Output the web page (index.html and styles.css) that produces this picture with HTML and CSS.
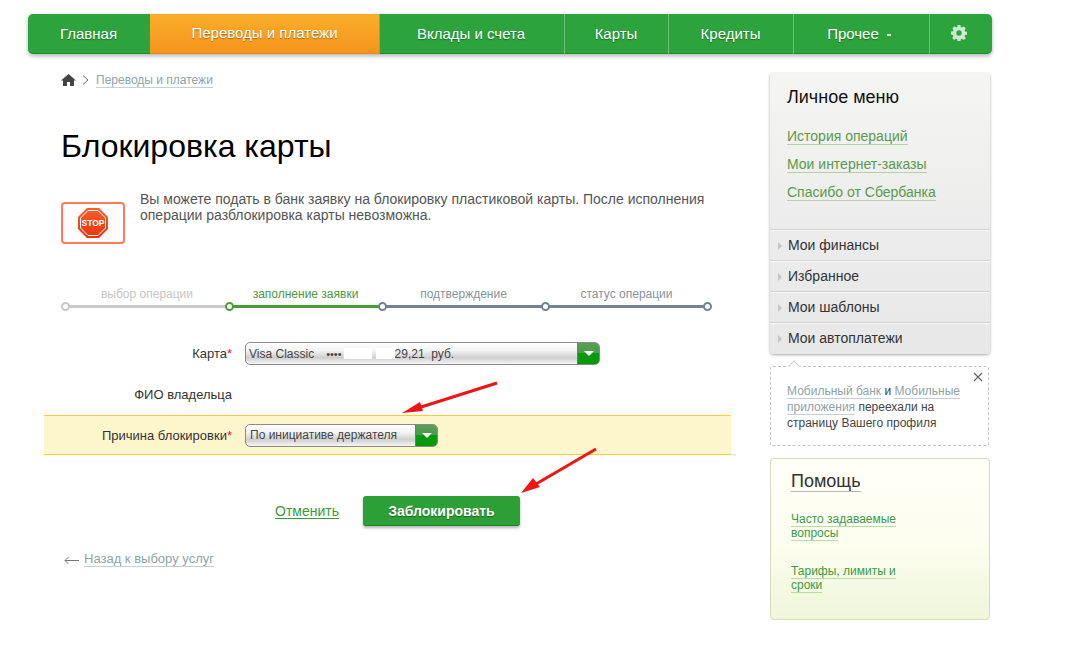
FILE: index.html
```html
<!DOCTYPE html>
<html lang="ru">
<head>
<meta charset="utf-8">
<title>Блокировка карты</title>
<link rel="stylesheet" href="styles.css">
</head>
<body>
<div class="page">
  <nav class="nav">
    <a class="nav-item w1 first">Главная</a>
    <a class="nav-item w2 active">Переводы и платежи</a>
    <a class="nav-item w3">Вклады и счета</a>
    <a class="nav-item w4 sep">Карты</a>
    <a class="nav-item w5 sep">Кредиты</a>
    <a class="nav-item w6 sep">Прочее<span class="caret"></span></a>
    <a class="nav-item w7 sep">
      <svg width="16" height="16" viewBox="0 0 16 16"><path class="gear" fill-rule="evenodd" d="M6.6 0h2.8l.4 2.1 1.2.5 1.8-1.2 2 2-1.2 1.8.5 1.2 2.1.4v2.8l-2.1.4-.5 1.2 1.2 1.8-2 2-1.8-1.2-1.2.5-.4 2.1H6.600l-.4-2.100-1.200-.5-1.800 1.200-2-2 1.200-1.800-.5-1.200L0 9.400V6.600l2.100-.4.5-1.200-1.200-1.800 2-2 1.800 1.200 1.200-.5zM8 5.300a2.700 2.700 0 1 0 0 5.400 2.700 2.700 0 0 0 0-5.400z"/></svg>
    </a>
  </nav>

  <div class="columns">
    <main class="main">
      <div class="crumbs">
        <svg width="15" height="12" viewBox="0 0 15 12"><path class="home" d="M7.500 0 15 6.500h-2V12H9V8H6v4H2V6.500H0z"/></svg>
        <svg class="crumb-sep" width="7" height="10" viewBox="0 0 7 10"><path d="M1 .5 6 5 1 9.500" fill="none" stroke="#666" stroke-width="1"/></svg>
        <a class="link-grey">Переводы и платежи</a>
      </div>
      <h1 class="title">Блокировка карты</h1>
      <div class="intro">
        <div class="stop-box">
          <svg width="30" height="30" viewBox="0 0 30 30">
            <defs><linearGradient id="stopfill" x1="0" y1="0" x2="0" y2="1"><stop offset="0" stop-color="#f9602f"/><stop offset="1" stop-color="#e8330e"/></linearGradient></defs>
            <polygon points="9,0 21,0 30,9 30,21 21,30 9,30 0,21 0,9" fill="url(#stopfill)"/>
            <polygon points="10,2.500 20,2.500 27.500,10 27.500,20 20,27.500 10,27.500 2.500,20 2.500,10" fill="none" stroke="#fff" stroke-width="1"/>
            <text x="15" y="18.200" class="stop-text" text-anchor="middle">STOP</text>
          </svg>
        </div>
        <p class="intro-text">Вы можете подать в банк заявку на блокировку пластиковой карты. После исполнения операции разблокировка карты невозможна.</p>
      </div>

      <div class="steps">
        <div class="step s-grey"><span class="step-label">выбор операции</span></div>
        <div class="step s-green"><span class="step-label">заполнение заявки</span></div>
        <div class="step s-slate"><span class="step-label">подтверждение</span></div>
        <div class="step s-slate last"><span class="step-label">статус операции</span></div>
      </div>

      <div class="form-row row-card">
        <div class="label">Карта<span class="req">*</span></div>
        <div class="select select-card">
          <span class="select-value">Visa Classic<span class="dots">••••</span><span class="mask m1"></span><span class="mask m2"></span>29,21&nbsp; руб.</span>
          <span class="select-btn"><span class="tri"></span></span>
        </div>
      </div>
      <div class="form-row row-name">
        <div class="label">ФИО владельца</div>
      </div>
      <div class="form-row row-reason">
        <div class="label">Причина блокировки<span class="req">*</span></div>
        <div class="select select-reason">
          <span class="select-value">По инициативе держателя</span>
          <span class="select-btn"><span class="tri"></span></span>
        </div>
      </div>

      <div class="actions">
        <a class="cancel">Отменить</a>
        <a class="submit">Заблокировать</a>
      </div>
      <div class="back">
        <svg width="15" height="9" viewBox="0 0 15 9"><path d="M4.500 1 1 4.500 4.500 8M1 4.500h14" fill="none" stroke="#777" stroke-width="1"/></svg>
        <a class="link-grey">Назад к выбору услуг</a>
      </div>
    </main>

    <aside class="side">
      <section class="menu">
        <div class="menu-top">
          <h2 class="menu-title">Личное меню</h2>
          <a class="menu-link"><span>История операций</span></a>
          <a class="menu-link"><span>Мои интернет-заказы</span></a>
          <a class="menu-link"><span>Спасибо от Сбербанка</span></a>
        </div>
        <div class="menu-row">Мои финансы</div>
        <div class="menu-row">Избранное</div>
        <div class="menu-row">Мои шаблоны</div>
        <div class="menu-row">Мои автоплатежи</div>
      </section>
      <section class="notice">
        <span class="notch"></span>
        <svg class="close" width="10" height="10" viewBox="0 0 10 10"><path d="M1 1l8 8M9 1l-8 8" stroke="#666" stroke-width="1.200"/></svg>
        <p class="notice-text"><a class="link-grey">Мобильный банк</a> и <a class="link-grey">Мобильные</a><br><a class="link-grey">приложения</a> переехали на<br>страницу Вашего профиля</p>
      </section>
      <section class="help">
        <h2 class="help-title">Помощь</h2>
        <p class="help-link"><a>Часто задаваемые</a><br><a>вопросы</a></p>
        <p class="help-link"><a>Тарифы, лимиты и</a><br><a>сроки</a></p>
      </section>
    </aside>
  </div>

  <svg class="arrows" width="1072" height="656" viewBox="0 0 1072 656">
    <path d="M497 383 418 408" stroke="#f01414" stroke-width="3" fill="none"/>
    <polygon points="402,413 420,402 423,411" fill="#f01414"/>
    <path d="M596 449 536 484" stroke="#f01414" stroke-width="3" fill="none"/>
    <polygon points="521,493 533,478 540,487" fill="#f01414"/>
  </svg>
</div>
</body>
</html>
```
FILE: styles.css
```css
* { box-sizing: border-box; }
html, body { margin: 0; padding: 0; background: #fff; }
body { font-family: "Liberation Sans", Arial, sans-serif; color: #333; }
.page { position: relative; width: 1072px; height: 656px; overflow: hidden; padding: 14px 0 0 28px; }

.nav { display: flex; width: 964px; height: 40px; border-radius: 5px; background: #2ca33c; box-shadow: 0 2px 4px rgba(0,0,0,.3); border-bottom: 1px solid #23872f; }
.nav-item { display: flex; align-items: center; justify-content: center; color: #fff; font-size: 15px; text-shadow: 0 1px 1px rgba(0,0,0,.35); height: 40px; padding-bottom: 2px; }
.w1 { width: 122px; padding-right: 1px; } .w2 { width: 230px; } .w3 { width: 184px; padding-right: 2px; } .w4 { width: 104px; } .w5 { width: 125px; } .w6 { width: 136px; padding-right: 5px; } .w7 { width: 63px; padding-right: 5px; }
.first { border-radius: 5px 0 0 5px; }
.sep { border-left: 1px solid #6cbf73; }
.w4, .w5 { padding-right: 1px; }
.active { background: linear-gradient(#f9ae2a, #f5951d); border-bottom: 1px solid #e58a17; border-right: 1px solid #d48c25; }
.caret { display: inline-block; width: 4px; height: 2px; margin-left: 8px; background: #cfe9cf; position: relative; top: 2px; }
.gear { fill: #cfe9cf; }

.columns { display: flex; align-items: flex-start; padding-top: 19px; margin-left: 16px; }
.main { width: 687px; flex: none; }
.side { width: 220px; flex: none; margin-left: 39px; }

.crumbs { display: flex; align-items: center; height: 14px; padding-left: 17px; }
.home { fill: #444; }
.crumb-sep { margin-left: 6px; margin-right: 7px; }
.link-grey { color: #8fa3a8; border-bottom: 1px solid #c3d0d3; }
.crumbs .link-grey { font-size: 12px; line-height: 13px; position: relative; top: 1px; }

.title { margin: 39px 0 0 17px; font-weight: 400; font-size: 32px; line-height: 40px; color: #000; }

.intro { display: flex; margin: 24px 0 0 17px; height: 96px; }
.stop-box { width: 64px; height: 42px; margin-top: 12px; border: 2px solid #ff7b5c; border-radius: 4px; display: flex; align-items: center; justify-content: center; background: #fffdfb; }
.stop-box svg { display: block; }
.stop-text { font-family: "Liberation Sans", Arial, sans-serif; font-size: 8.500px; font-weight: 700; fill: #fff; }
.intro-text { margin: 1px 0 0 15px; width: 570px; font-size: 14px; line-height: 16px; color: #555; }

.steps { display: flex; margin-left: 21px; width: 643px; height: 29px; }
.step { position: relative; height: 29px; width: 164px; text-align: center; }
.step:nth-child(2) { width: 153px; }
.step:nth-child(3), .step:nth-child(4) { width: 163px; }
.step-label { display: block; font-size: 12px; line-height: 14px; padding-top: 1px; }
.step::before { content: ""; position: absolute; left: 0; right: 0; top: 19px; height: 3px; background: currentColor; }
.step::after { content: ""; position: absolute; left: -4px; top: 16px; width: 5px; height: 5px; border-radius: 50%; border: 2px solid currentColor; background: #fff; }
.s-grey { color: #c9c9c9; }
.s-grey .step-label { color: #c6c6c6; }
.s-green { color: #4a9d36; }
.s-green .step-label { color: #4a9a3a; }
.s-slate { color: #73838f; }
.s-slate .step-label { color: #87939c; }
.last .step-label::after { content: ""; position: absolute; right: -4px; top: 16px; width: 5px; height: 5px; border-radius: 50%; border: 2px solid #73838f; background: #fff; }

.form-row { display: flex; align-items: center; }
.label { width: 188px; flex: none; margin-right: 13px; text-align: right; font-size: 13px; color: #333; white-space: nowrap; }
.req { color: #e02020; }
.row-card { margin-top: 27px; height: 23px; }
.row-name { height: 50px; padding-top: 8px; }
.row-reason { height: 40px; background: #fdf6cd; border-top: 1px solid #ffcc33; border-bottom: 1px solid #ffcc33; }

.select { display: flex; height: 23px; border: 1px solid #8a8a8a; border-radius: 5px; background: linear-gradient(#fff 0, #f4f4f4 35%, #cfcfcf 70%, #f5f5f5 100%); overflow: hidden; }
.select-card { width: 355px; }
.select-reason { width: 193px; }
.select-value { flex: 1; display: flex; align-items: center; padding-left: 3px; font-size: 12px; color: #444; white-space: pre; }
.select-reason .select-value { padding-left: 4px; }
.select-btn { width: 22px; flex: none; background: linear-gradient(#5a9e55 0, #4d9a4a 48%, #079a0f 50%, #059a0d 100%); display: flex; align-items: center; justify-content: center; border-left: 1px solid #777; }
.tri { width: 0; height: 0; border-left: 5px solid transparent; border-right: 5px solid transparent; border-top: 5px solid #fff; }
.dots { margin-left: 12px; font-size: 11px; }
.mask { display: inline-block; height: 11px; background: #fff; }
.m1 { width: 28px; margin-left: 2px; }
.m2 { width: 19px; margin-left: 4px; }

.actions { display: flex; align-items: center; margin-top: 41px; padding-left: 231px; height: 30px; }
.cancel { color: #3a9a35; font-size: 14px; text-decoration: underline; text-underline-offset: 2px; }
.submit { margin-left: 24px; width: 157px; height: 30px; display: flex; align-items: center; justify-content: center; background: #2c9f36; color: #fff; font-weight: 700; font-size: 14px; border-radius: 3px; border-bottom: 1px solid #1f7f29; box-shadow: 0 2px 3px rgba(0,0,0,.3); text-shadow: 0 1px 1px rgba(0,0,0,.4); }
.back { display: flex; align-items: center; margin: 25px 0 0 20px; height: 16px; }
.back svg { margin-right: 5px; margin-top: 3px; }
.back .link-grey { font-size: 13px; line-height: 14px; }

.menu { height: 281px; border-radius: 4px; background: linear-gradient(#f5f5f3, #ececec 55%, #e8e8e8); box-shadow: 0 1px 3px rgba(0,0,0,.35); }
.menu-top { height: 156px; padding: 14px 0 0 17px; }
.menu-title { margin: 0 0 19px; font-weight: 400; font-size: 18px; line-height: 21px; color: #111; }
.menu-link { display: block; height: 28px; font-size: 14px; line-height: 18px; color: #5b9a4b; }
.menu-link span { border-bottom: 1px solid #b5d0a8; }
.menu-row { position: relative; height: 31px; padding-left: 18px; border-top: 1px solid #d2d2d2; box-shadow: inset 0 1px 0 #f8f8f8; font-size: 14px; line-height: 31px; color: #333; }
.menu-row::before { content: ""; position: absolute; left: 8px; top: 12px; border-left: 4px solid #c4c4c4; border-top: 4px solid transparent; border-bottom: 4px solid transparent; }

.notice { position: relative; margin-top: 12px; width: 219px; height: 80px; border: 1px dashed #c4c4c4; border-radius: 3px; padding: 16px 10px 0 16px; }
.notch { position: absolute; left: 19px; top: -5px; width: 8px; height: 8px; background: #fff; border-left: 1px solid #cfcfcf; border-top: 1px solid #cfcfcf; transform: rotate(45deg); }
.close { position: absolute; right: 5px; top: 5px; }
.notice-text { margin: 0; font-size: 12px; line-height: 16px; color: #444; }

.help { margin-top: 12px; height: 162px; border: 1px solid #ddd9bf; border-radius: 4px; background: linear-gradient(#fffff7, #fdfef0 50%, #eff6da); padding: 12px 0 0 20px; }
.help-title { display: inline-block; margin: 0; font-weight: 400; font-size: 18px; line-height: 20px; color: #333; border-bottom: 1px solid #b9b9b0; }
.help-link { margin: 20px 0 0; width: 125px; font-size: 12px; line-height: 14px; color: #3c9a45; }
.help-link + .help-link { margin-top: 24px; }
.help-link a { border-bottom: 1px solid #b9dda0; }

.arrows { position: absolute; left: 0; top: 0; pointer-events: none; }
```
